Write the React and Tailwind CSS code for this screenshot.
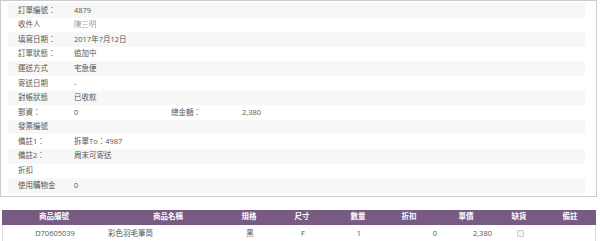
const rows = [
  ['訂單編號：', '4879'],
  ['收件人', '陳三明', true],
  ['填寫日期：', '2017年7月12日'],
  ['訂單狀態：', '追加中'],
  ['運送方式', '宅急便'],
  ['寄送日期', '-'],
  ['對帳狀態', '已收款'],
  ['郵資：', '0', false, ['總金額：', '2,380']],
  ['發票編號', ''],
  ['備註1：', '拆單To：4987'],
  ['備註2：', '周末可寄送'],
  ['折扣', ''],
  ['使用購物金', '0'],
]

const cols = [
  { label: '商品編號', w: 'w-[104px]', value: 'D70605039', cell: 'text-center' },
  { label: '商品名稱', w: 'w-[124px]', value: '彩色羽毛筆筒', cell: 'text-left pl-[1px]' },
  { label: '規格', w: 'w-[38px]', value: '黑', cell: 'text-center' },
  { label: '尺寸', w: 'w-[68px]', value: 'F', cell: 'text-center' },
  { label: '數量', w: 'w-[44px]', value: '1', cell: 'text-center' },
  { label: '折扣', w: 'w-[58px]', value: '0', cell: 'text-right pr-[2px]' },
  { label: '單價', w: 'w-[56px]', value: '2,380', cell: 'text-right pr-[3px]' },
  { label: '缺貨', w: 'w-[50px]', value: 'box', cell: 'text-center' },
  { label: '備註', w: 'w-[52px]', value: '', cell: 'text-center' },
]

export default function App() {
  return (
    <div className="w-[600px] h-[241px] overflow-hidden bg-white text-[7.5px] text-[#555] leading-none" style={{ fontFamily: '"Open Sans", "Noto Sans CJK TC", sans-serif' }}>
      <div className="w-[597px] border border-[#ccc] pt-[2px] pb-[3px] pl-[7px] pr-[11px]">
        {rows.map(([label, value, blur, extra], i) => (
          <div key={i} className={`flex items-center h-[14.6px] pl-[10px] ${i % 2 === 0 ? 'bg-[#f7f7f7]' : 'bg-white'}`}>
            <div className="w-[56px] shrink-0">{label}</div>
            <div className={`w-[97px] shrink-0 ${blur ? 'text-[#99a] blur-[0.5px]' : ''}`}>{value}</div>
            {extra && (
              <>
                <div className="w-[71px] shrink-0">{extra[0]}</div>
                <div>{extra[1]}</div>
              </>
            )}
          </div>
        ))}
      </div>
      <div className="mt-[13px] ml-[2px] w-[594px]">
        <div className="flex h-[15px] bg-[#775b83] text-white font-bold items-center">
          {cols.map(c => (
            <div key={c.label} className={`${c.w} shrink-0 text-center`}>{c.label}</div>
          ))}
        </div>
        <div className="flex h-[18px] items-center border-l border-r border-[#ddd]">
          {cols.map(c => (
            <div key={c.label} className={`${c.w} shrink-0 ${c.cell}`}>
              {c.value === 'box' ? (
                <span className="inline-block w-[7px] h-[7px] border border-[#ccc] rounded-[1px] bg-[#f4f4f4] align-middle" />
              ) : c.value}
            </div>
          ))}
        </div>
      </div>
    </div>
  )
}
